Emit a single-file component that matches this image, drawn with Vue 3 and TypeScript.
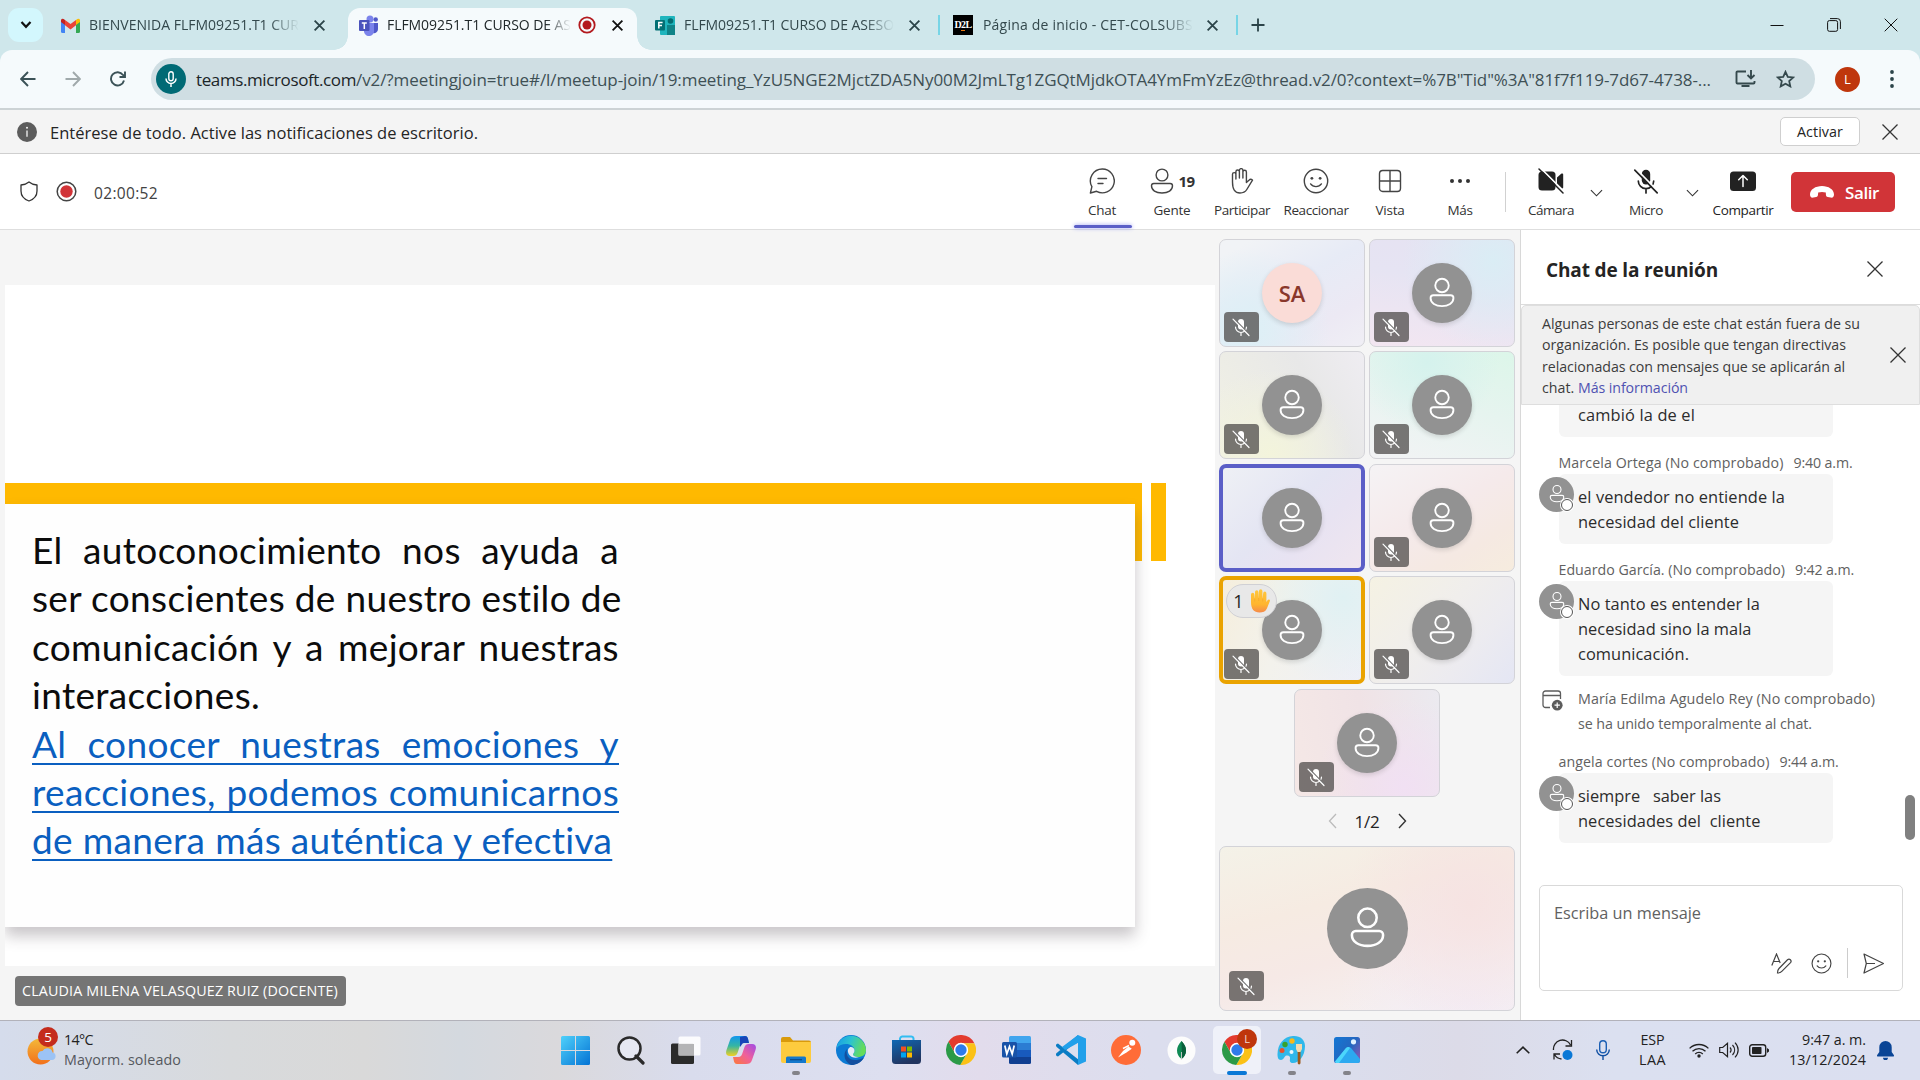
<script setup lang="ts">
interface Tile {
  id: number
  bg: string
  initials?: string
  muted: boolean
  state?: 'speaking' | 'raised'
}

interface Message {
  author: string
  authorWidth: number
  time: string
  lines: { text: string; width: number }[]
}

// Spreads a line of text over a given width, so that labels keep their measure in any sans family
const vFit = {
  mounted(el: HTMLElement, binding: { value: number }) {
    const count = (el.textContent || '').length
    const natural = el.getBoundingClientRect().width
    if (count > 0) el.style.letterSpacing = `${(binding.value - natural) / count}px`
  },
}

const tiles: Tile[] = [
  { id: 1, bg: 'radial-gradient(circle at 20% 85%, #dcf0f6, transparent 55%), linear-gradient(150deg, #f1f3f6 10%, #e7ebf6 45%, #ece9f4 75%, #f0eff5)', initials: 'SA', muted: true },
  { id: 2, bg: 'radial-gradient(circle at 85% 20%, #daedf5, transparent 60%), linear-gradient(10deg, #f3e6f1, #e6e4f3 60%, #e6e2f2)', muted: true },
  { id: 3, bg: 'radial-gradient(circle at 35% 95%, #f3f4dc, transparent 60%), linear-gradient(60deg, #f1f1e4, #e8e8e8 65%, #efedf2)', muted: true },
  { id: 4, bg: 'radial-gradient(circle at 40% 10%, #d5f2ed, transparent 55%), linear-gradient(200deg, #dcf6e9, #e6f4ef 45%, #f3f3f5)', muted: true },
  { id: 5, bg: 'linear-gradient(135deg, #eff1f5, #e4e5f3 45%, #e8e3f2 65%, #f0e6ef)', muted: false, state: 'speaking' },
  { id: 6, bg: 'linear-gradient(150deg, #f5f3f5, #f5eaeb 45%, #f5e9e2 75%, #f6ecde)', muted: true },
  { id: 7, bg: 'radial-gradient(circle at 85% 20%, #e0f1f3, transparent 60%), linear-gradient(110deg, #f5eedc, #f3f2ec 45%, #efeff7)', muted: true, state: 'raised' },
  { id: 8, bg: 'linear-gradient(130deg, #f5f2e3, #f0eeec 45%, #ecebf0 70%, #e4e6f4)', muted: true },
  { id: 9, bg: 'radial-gradient(circle at 75% 90%, #f1e0f3, transparent 60%), linear-gradient(80deg, #f5e8e6, #f0e3e6 50%, #ebeaf0)', muted: true },
]

const bannerLines = [
  { text: 'Algunas personas de este chat están fuera de su', width: 318 },
  { text: 'organización. Es posible que tengan directivas', width: 304 },
  { text: 'relacionadas con mensajes que se aplicarán al', width: 303 },
]

const earlier: Message[] = [
  {
    author: 'Marcela Ortega (No comprobado)',
    authorWidth: 225,
    time: '9:40 a.m.',
    lines: [
      { text: 'el vendedor no entiende la', width: 207 },
      { text: 'necesidad del cliente', width: 161 },
    ],
  },
  {
    author: 'Eduardo García. (No comprobado)',
    authorWidth: 226.5,
    time: '9:42 a.m.',
    lines: [
      { text: 'No tanto es entender la', width: 182 },
      { text: 'necesidad sino la mala', width: 173.5 },
      { text: 'comunicación.', width: 111 },
    ],
  },
]

const latest: Message[] = [
  {
    author: 'angela cortes (No comprobado)',
    authorWidth: 211,
    time: '9:44 a.m.',
    lines: [
      { text: 'siempre   saber las', width: 143 },
      { text: 'necesidades del  cliente', width: 182.5 },
    ],
  },
]

const groups = [
  { key: 'earlier', messages: earlier, event: true },
  { key: 'latest', messages: latest, event: false },
]

const slideText = [
  'El autoconocimiento nos ayuda a',
  'ser conscientes de nuestro estilo de',
  'comunicación y a mejorar nuestras',
  'interacciones.',
]
const slideLink = [
  'Al conocer nuestras emociones y',
  'reacciones, podemos comunicarnos',
  'de manera más auténtica y efectiva',
]
const slideWidths = [587, 587, 587, 226]
const linkWidths = [587, 587, 579.5]
</script>

<template>
  <div class="screen">
    <svg class="sprite" aria-hidden="true">
      <symbol id="i-x" viewBox="0 0 20 20"><path d="M2.5 2.5l15 15M17.5 2.5l-15 15" fill="none" stroke="currentColor" /></symbol>
      <symbol id="i-person" viewBox="0 0 32 36">
        <g fill="none" stroke="currentColor" stroke-width="2"><circle cx="16" cy="10" r="7.2" /><path d="M6.8 20.4h18.4a3 3 0 0 1 3 3c0 5.4-5.4 8.6-12.2 8.6S3.8 28.800 3.800 23.400a3 3 0 0 1 3-3z" /></g>
      </symbol>
      <symbol id="i-micoff" viewBox="0 0 20 20">
        <rect x="7" y="2" width="6" height="10.500" rx="3" fill="currentColor" />
        <path d="M4.500 10a5.500 5.500 0 0 0 11 0M10 15.500V18.500" fill="none" stroke="currentColor" stroke-width="1.200" stroke-linecap="round" />
        <path class="slash-gap" d="M3.200 1.700l15 15.400" fill="none" stroke-width="1.300" />
        <path d="M2 2.200l16 16.300" fill="none" stroke="currentColor" stroke-width="1.200" stroke-linecap="round" />
      </symbol>
      <symbol id="i-chrome" viewBox="2 2 44 44">
        <path d="M43.600 14H24a10 10 0 0 0-8.660 15L5.540 12.030A22 22 0 0 1 43.600 14z" fill="#e33b2e" />
        <path d="M43.600 14A22 22 0 0 1 22.860 45.970L32.660 29A10 10 0 0 0 24 14z" fill="#fbc116" />
        <path d="M22.860 45.970A22 22 0 0 1 5.540 12.030L15.340 29a10 10 0 0 0 17.320 0z" fill="#2b9a47" />
        <circle cx="24" cy="24" r="10.500" fill="#fff" /><circle cx="24" cy="24" r="8.300" fill="#2f7bea" />
      </symbol>
      <symbol id="i-smile" viewBox="0 0 24 24">
        <circle cx="12" cy="12" r="10.800" fill="none" stroke="currentColor" stroke-width="1.300" />
        <circle cx="8.200" cy="9.500" r="1.300" fill="currentColor" /><circle cx="15.800" cy="9.500" r="1.300" fill="currentColor" />
        <path d="M7 14.700c2.400 3.300 7.600 3.300 10 0" fill="none" stroke="currentColor" stroke-width="1.300" stroke-linecap="round" />
      </symbol>
      <symbol id="i-down" viewBox="0 0 14 8"><path d="M1 1l6 6 6-6" fill="none" stroke="currentColor" stroke-width="1.200" /></symbol>
    </svg>

    <header class="tabs">
      <div class="tab-search"><svg width="14" height="10" viewBox="0 0 14 10"><path d="M2.500 2l4.500 4.800L11.500 2" fill="none" stroke="#111" stroke-width="2.200" /></svg></div>
      <div class="tab first">
        <svg width="19" height="15" viewBox="0 0 19 15"><path d="M0 2v11.500Q0 15 1.500 15H4V5z" fill="#4285f4" /><path d="M19 2v11.500q0 1.500-1.500 1.500H15V5z" fill="#34a853" /><path d="M15 2v5l4-3V2q-1-2.500-4 0z" fill="#fbbc04" /><path d="M4 2v5L0 4V2q1-2.500 4 0z" fill="#c5221f" /><path d="M4 2l5.500 4L15 2v5.200l-5.500 4.300L4 7.200z" fill="#ea4335" /></svg>
        <div class="tab-title w210"><span v-fit="210">BIENVENIDA FLFM09251.T1 CUR</span></div>
        <svg class="tx"><use href="#i-x" /></svg>
      </div>
      <div class="tab active">
        <svg width="19" height="21" viewBox="0 0 19 21"><circle cx="11" cy="4" r="3.500" fill="#7b83eb" /><circle cx="16.700" cy="4.500" r="2.200" fill="#5059c9" /><path d="M13 8h6v6a4 4 0 0 1-5 4z" fill="#5059c9" /><path d="M5 8h10v7a5 5 0 0 1-10 2z" fill="#7b83eb" /><rect y="5" width="10.500" height="11" rx="1" fill="#4b53bc" /><path d="M2.800 8h5M5.300 8v6" stroke="#fff" stroke-width="1.500" /></svg>
        <div class="tab-title w183"><span v-fit="184">FLFM09251.T1 CURSO DE AS</span></div>
        <svg class="rec" viewBox="0 0 18 18"><circle cx="9" cy="9" r="7.700" fill="none" stroke="#b3191e" stroke-width="1.800" /><circle cx="9" cy="9" r="4.500" fill="#b3191e" /></svg>
        <svg class="tx"><use href="#i-x" /></svg>
      </div>
      <div class="tab third">
        <svg width="20" height="19" viewBox="0 0 20 19"><rect x="5" width="15" height="19" rx="1" fill="#1fb5bd" /><path d="M12 9h8v10h-8z" fill="#0f8387" /><circle cx="15.500" cy="5" r="2.800" fill="#036c70" /><rect y="4" width="10" height="10.500" rx="1" fill="#037074" /><path d="M3.800 12.500v-6h3.800M3.800 9.500h3.200" fill="none" stroke="#fff" stroke-width="1.500" /></svg>
        <div class="tab-title w208"><span v-fit="210">FLFM09251.T1 CURSO DE ASESO</span></div>
        <svg class="tx"><use href="#i-x" /></svg>
      </div>
      <i class="tsep"></i>
      <div class="tab fourth">
        <span class="d2l">D<em>2</em>L</span>
        <div class="tab-title w210"><span v-fit="210">Página de inicio - CET-COLSUBS</span></div>
        <svg class="tx"><use href="#i-x" /></svg>
      </div>
      <i class="tsep"></i>
      <svg class="plus" viewBox="0 0 14 14"><path d="M7 .5v13M.5 7h13" stroke="#2b4449" stroke-width="1.800" /></svg>
      <div class="winctl">
        <svg width="14" height="14" viewBox="0 0 14 14"><path d="M.5 7.500h13" stroke="#111" /></svg>
        <svg width="14" height="14" viewBox="0 0 14 14"><rect x=".6" y="2.600" width="10" height="10.700" rx="1.800" fill="none" stroke="#111" /><path d="M3 .6h7.400a3 3 0 0 1 3 3V11" fill="none" stroke="#111" /></svg>
        <svg width="14" height="14" viewBox="0 0 14 14"><path d="M.7.7l12.600 12.600M13.300.7L.7 13.300" stroke="#111" /></svg>
      </div>
    </header>

    <div class="toolbar">
      <svg width="16" height="16" viewBox="0 0 16 16"><path d="M15.500 8H1.500M8 1L1.200 8 8 15" fill="none" stroke="#3b5257" stroke-width="1.900" /></svg>
      <svg width="16" height="16" viewBox="0 0 16 16"><path d="M.5 8h14M8 1l6.800 7L8 15" fill="none" stroke="#a0a9ab" stroke-width="1.900" /></svg>
      <svg width="16" height="16" viewBox="0 0 16 16"><path d="M14 9.500A6.600 6.600 0 1 1 13 4l2 2M15 .5V6H9.500" fill="none" stroke="#3b5257" stroke-width="1.900" /></svg>
      <div class="omni">
        <div class="micdot"><svg width="12" height="17" viewBox="0 0 12 17"><rect x="3.800" y=".8" width="4.400" height="9" rx="2.200" fill="none" stroke="#fff" stroke-width="1.400" /><path d="M1 7.500a5 5 0 0 0 10 0M6 12.500V16" fill="none" stroke="#fff" stroke-width="1.500" /></svg></div>
        <div class="url"><span v-fit="160" class="host">teams.microsoft.com</span><span v-fit="1355">/v2/?meetingjoin=true#/l/meetup-join/19:meeting_YzU5NGE2MjctZDA5Ny00M2JmLTg1ZGQtMjdkOTA4YmFmYzEz@thread.v2/0?context=%7B"Tid"%3A"81f7f119-7d67-4738-...</span></div>
        <svg class="install" width="21" height="18" viewBox="0 0 21 18"><path d="M11 1.500H2.500a1 1 0 0 0-1 1v10a1 1 0 0 0 1 1h16a1 1 0 0 0 1-1V11M6.500 16h8M16 0v8M12.500 5l3.500 3.500L19.500 5" fill="none" stroke="#35494d" stroke-width="1.900" /></svg>
        <svg class="star" width="19" height="18" viewBox="0 0 19 18"><path d="M9.500 1.800l2.300 5 5.400.6-4 3.700 1.100 5.300-4.800-2.700-4.800 2.700 1.100-5.300-4-3.700 5.400-.6z" fill="none" stroke="#35494d" stroke-width="1.800" /></svg>
      </div>
      <span class="avatar-l">L</span>
      <svg class="kebab" width="4" height="18" viewBox="0 0 4 18"><circle cx="2" cy="2" r="1.900" /><circle cx="2" cy="9" r="1.900" /><circle cx="2" cy="16" r="1.900" /></svg>
    </div>

    <div class="notice">
      <svg width="20" height="20" viewBox="0 0 20 20"><circle cx="10" cy="10" r="10" fill="#5c5c5c" /><circle cx="10" cy="5.800" r="1" fill="#f4f4f4" /><path d="M10 8.500v6.300" stroke="#f4f4f4" stroke-width="1.300" /></svg>
      <span v-fit="428" class="notice-text">Entérese de todo. Active las notificaciones de escritorio.</span>
      <button><span v-fit="46">Activar</span></button>
      <svg class="nx"><use href="#i-x" /></svg>
    </div>

    <div class="callbar">
      <svg width="18" height="21" viewBox="0 0 18 21"><path d="M9 1c2.300 1.900 4.800 2.800 8 3v6c0 5.200-3.200 8.300-8 10-4.800-1.700-8-4.800-8-10V4c3.200-.2 5.700-1.100 8-3z" fill="none" stroke="#333" stroke-width="1.300" stroke-linejoin="round" /></svg>
      <svg class="recdot" width="21" height="21" viewBox="0 0 21 21"><circle cx="10.500" cy="10.500" r="9.300" fill="#fff" stroke="#444" stroke-width="1.500" /><circle cx="10.500" cy="10.500" r="6.200" fill="#d13438" /></svg>
      <span v-fit="64" class="clock">02:00:52</span>
      <div class="actions">
        <div class="act on"><svg width="26" height="26" viewBox="0 0 26 26"><path d="M13.300 1a11.900 11.900 0 1 1-5.700 22.300L1.400 25l1.500-6.300A11.900 11.900 0 0 1 13.300 1z" fill="none" stroke="#444" stroke-width="1.400" stroke-linejoin="round" /><path d="M9 10.500h8.500M9 15.500h5" stroke="#444" stroke-width="1.400" stroke-linecap="round" /></svg><span v-fit="28">Chat</span></div>
        <div class="act"><div class="people"><svg width="24" height="26" viewBox="0 0 24 26"><g fill="none" stroke="#444" stroke-width="1.400"><circle cx="12" cy="7" r="5.900" /><path d="M3.800 15.500h16.400a2.300 2.300 0 0 1 2.300 2.300c0 4.400-4.300 7.200-10.500 7.200S1.500 22.200 1.500 17.800a2.300 2.300 0 0 1 2.300-2.300z" /></g></svg><b v-fit="16">19</b></div><span v-fit="37">Gente</span></div>
        <div class="act"><svg width="24" height="26" viewBox="0 0 24 26"><path d="M2.500 14V6.300a1.700 1.700 0 0 1 3.400 0V11 3.800a1.700 1.700 0 0 1 3.500 0V10 2.400a1.700 1.700 0 0 1 3.500 0V10 4a1.700 1.700 0 0 1 3.500 0v10.500l2.800-2.600c1-1 2.600-.8 3.300.3l-5.700 9.300C15.200 24 13 25 10 25c-5.500 0-7.500-4-7.500-11z" fill="none" stroke="#444" stroke-width="1.400" stroke-linejoin="round" /></svg><span v-fit="56">Participar</span></div>
        <div class="act wide"><svg width="26" height="26" class="dk"><use href="#i-smile" /></svg><span v-fit="65">Reaccionar</span></div>
        <div class="act"><svg width="24" height="26" viewBox="0 0 24 26"><rect x="1.500" y="2.500" width="21" height="21" rx="3.200" fill="none" stroke="#444" stroke-width="1.400" /><path d="M12 2.500v21M1.500 13h21" stroke="#444" stroke-width="1.400" /></svg><span v-fit="29">Vista</span></div>
        <div class="act"><svg width="22" height="26" viewBox="0 0 22 26"><g fill="#333"><circle cx="3" cy="13" r="2" /><circle cx="11" cy="13" r="2" /><circle cx="19" cy="13" r="2" /></g></svg><span v-fit="25">Más</span></div>
        <i class="asep"></i>
        <div class="act cam"><svg width="26" height="26" viewBox="0 0 26 26"><rect x=".5" y="3.500" width="17" height="19" rx="3.500" fill="#222" /><path d="M19 9.500l4.200-3.700c1-.8 2-.3 2 .9v12.600c0 1.200-1 1.700-2 .9L19 16.500z" fill="#222" /><path d="M2.500 0L27 24.500" stroke="#fff" stroke-width="1.600" /><path d="M1 1l24 24" stroke="#222" stroke-width="1.500" stroke-linecap="round" /></svg><span v-fit="46">Cámara</span></div>
        <div class="chev c1"><svg width="13" height="8"><use href="#i-down" /></svg></div>
        <div class="act wide"><svg width="28" height="28" class="bk micro"><use href="#i-micoff" /></svg><span v-fit="34">Micro</span></div>
        <div class="chev c2"><svg width="13" height="8"><use href="#i-down" /></svg></div>
        <div class="act share"><svg width="26" height="26" viewBox="0 0 26 26"><rect y="3.500" width="26" height="19.500" rx="3.500" fill="#222" /><path d="M13 18.500v-10M8.700 11.800L13 7.500l4.300 4.300" fill="none" stroke="#fff" stroke-width="1.500" stroke-linecap="round" stroke-linejoin="round" /></svg><span v-fit="61">Compartir</span></div>
        <div class="leave"><svg width="24" height="12" viewBox="0 0 24 12"><path d="M0 8.500C0 3.500 5.500 0 12 0s12 3.500 12 8.500c0 2.500-1.300 3.500-3.500 3l-2.700-.6c-1.400-.3-1.800-1.200-1.900-2.500L15.800 6.500c-2.400-.8-5.200-.8-7.600 0L8 8.400c-.1 1.300-.5 2.200-1.900 2.500l-2.600.6C1.300 12 0 11 0 8.500z" fill="#fff" /></svg><b v-fit="34">Salir</b></div>
      </div>
    </div>

    <main>
      <section class="stage">
        <div class="slide">
          <i class="accent"></i>
          <div class="card">
            <div class="copy">
              <p v-for="(line, i) in slideText" :key="line" :class="{ full: slideWidths[i] === 587 }">{{ line }}</p>
              <p v-for="(line, i) in slideLink" :key="line" class="link" :class="{ full: linkWidths[i] === 587 }">{{ line }}</p>
            </div>
          </div>
          <i class="accent2"></i>
        </div>
        <div class="presenter"><span v-fit="316">CLAUDIA MILENA VELASQUEZ RUIZ (DOCENTE)</span></div>
      </section>

      <section class="gallery">
        <div class="grid">
          <div v-for="t in tiles" :key="t.id" class="tile" :class="t.state" :style="{ background: t.bg }">
            <div class="face" :class="{ initials: t.initials }">
              <span v-if="t.initials">{{ t.initials }}</span>
              <svg v-else width="30" height="34"><use href="#i-person" /></svg>
            </div>
            <div v-if="t.muted" class="mute"><svg width="20" height="20"><use href="#i-micoff" /></svg></div>
            <div v-if="t.state === 'raised'" class="hand">1
              <svg width="20" height="24" viewBox="0 0 20 24"><defs><linearGradient id="hg" x1="0" y1="0" x2="0" y2="1"><stop offset="0" stop-color="#ffc83d" /><stop offset=".65" stop-color="#ffb52e" /><stop offset="1" stop-color="#f58a4b" /></linearGradient></defs><path d="M1 13V5.500a1.700 1.700 0 0 1 3.400 0L5 10V3a1.700 1.700 0 0 1 3.400 0v6.500L9 2a1.700 1.700 0 0 1 3.400 0v8l.8-5.800a1.600 1.600 0 0 1 3.200 0V13l1.300-2c.8-1.200 2.600-.4 2.200 1l-3 7.500C15.500 22.500 13 23.500 9.500 23.500 4 23.500 1 20 1 13z" fill="url(#hg)" /><path d="M4.700 9.500v3M8.700 9v3M12.700 9.500v3" stroke="#f3a52e" stroke-width=".6" /></svg>
            </div>
          </div>
        </div>
        <div class="pager">
          <svg width="9" height="16" viewBox="0 0 9 16"><path d="M8 1L1.500 8 8 15" fill="none" stroke="#bbb" stroke-width="1.300" /></svg>
          <span v-fit="25">1/2</span>
          <svg width="9" height="16" viewBox="0 0 9 16"><path d="M1 1l6.500 7L1 15" fill="none" stroke="#333" stroke-width="1.400" /></svg>
        </div>
        <div class="tile large">
          <div class="face"><svg width="41" height="46"><use href="#i-person" /></svg></div>
          <div class="mute"><svg width="20" height="20"><use href="#i-micoff" /></svg></div>
        </div>
      </section>

      <aside class="chat">
        <div class="chat-head"><h2><span v-fit="172">Chat de la reunión</span></h2><svg class="nx"><use href="#i-x" /></svg></div>
        <div class="banner">
          <div>
            <div v-for="l in bannerLines" :key="l.text"><span v-fit="l.width">{{ l.text }}</span></div>
            <div><span v-fit="36">chat. </span><a v-fit="110">Más información</a></div>
          </div>
          <svg class="nx"><use href="#i-x" /></svg>
        </div>
        <div class="thread">
          <div class="bubble cut"><span v-fit="117">cambió la de el</span></div>
          <template v-for="g in groups" :key="g.key">
            <div v-for="m in g.messages" :key="m.author" class="msg">
              <div class="meta"><span v-fit="m.authorWidth">{{ m.author }}</span><span v-fit="59" class="time">{{ m.time }}</span></div>
              <div class="bubble">
                <div v-for="l in m.lines" :key="l.text"><span v-fit="l.width">{{ l.text }}</span></div>
                <div class="mini"><svg width="18" height="20"><use href="#i-person" /></svg><i></i></div>
              </div>
            </div>
            <div v-if="g.event" class="event">
              <svg width="21" height="21" viewBox="0 0 21 21"><path d="M18.500 9V3.500a2.500 2.500 0 0 0-2.500-2.500H3.500A2.500 2.500 0 0 0 1 3.500V15a2.500 2.500 0 0 0 2.500 2.500H8M1 5.500h17.500" fill="none" stroke="#5c5c5c" stroke-width="1.300" /><circle cx="15.200" cy="15.200" r="5.400" fill="#5c5c5c" /><path d="M15.200 12.500v5.400M12.500 15.200h5.400" stroke="#fff" stroke-width="1.200" /></svg>
              <div>
                <div><span v-fit="297">María Edilma Agudelo Rey (No comprobado)</span></div>
                <div><span v-fit="234">se ha unido temporalmente al chat.</span></div>
              </div>
            </div>
          </template>
          <i class="thumb"></i>
        </div>
        <div class="compose">
          <span v-fit="147" class="ph">Escriba un mensaje</span>
          <div class="tools">
            <svg width="21" height="21" viewBox="0 0 21 21"><path d="M.8 12.500L5.500 1l3.700 9M2.500 8.500h6.200" fill="none" stroke="#444" stroke-width="1.200" /><path d="M6.500 20c0-2 .3-3.300 1.500-4.500l8.500-8.700c2-1.700 4.700.7 3 2.800l-8.700 8.700C9.600 19.600 8.300 20 6.500 20z" fill="none" stroke="#444" stroke-width="1.200" /></svg>
            <svg width="21" height="21" class="dk sm"><use href="#i-smile" /></svg>
            <i></i>
            <svg width="21" height="21" viewBox="0 0 21 21"><path d="M1 1l19.500 9.500L1 20l2.300-9.500zM3.300 10.500H12" fill="none" stroke="#444" stroke-width="1.200" stroke-linejoin="round" /></svg>
          </div>
        </div>
      </aside>
    </main>

    <footer>
      <div class="weather">
        <svg width="32" height="36" viewBox="0 0 32 36"><defs><linearGradient id="sun" x1="0" y1="0" x2="0" y2="1"><stop offset="0" stop-color="#f3b93a" /><stop offset="1" stop-color="#f2701b" /></linearGradient></defs><circle cx="13.500" cy="21.500" r="13" fill="url(#sun)" /><path d="M14 30h11a3.800 3.800 0 0 0 .6-7.500A5.500 5.500 0 0 0 15.500 21 4.600 4.600 0 0 0 14 30z" fill="#9cc3f5" /></svg>
        <span class="count">5</span>
        <div class="wtext"><span v-fit="29">14°C</span><br /><span v-fit="117" class="soft">Mayorm. soleado</span></div>
      </div>

      <div class="apps">
        <div><svg width="29" height="29" viewBox="0 0 29 29"><defs><linearGradient id="win" x1="0" y1="0" x2="1" y2="1"><stop offset="0" stop-color="#4fd1fb" /><stop offset="1" stop-color="#0473d4" /></linearGradient></defs><path d="M0 1.500Q0 0 1.500 0H14v14H0zM15 0h12.500Q29 0 29 1.500V14H15zM0 15h14v14H1.500Q0 29 0 27.500zM15 15h14v12.500q0 1.500-1.500 1.500H15z" fill="url(#win)" /></svg></div>
        <div><svg width="28" height="29" viewBox="0 0 28 29"><circle cx="12.500" cy="12.500" r="11" fill="#e6e8f2" stroke="#2a2a2a" stroke-width="2.500" /><path d="M19 20l7 7" stroke="#2a2a2a" stroke-width="3.200" stroke-linecap="round" /></svg></div>
        <div><svg width="30" height="28" viewBox="0 0 30 28"><rect y="7.500" width="23" height="20.500" rx="1.500" fill="#2b2b2b" /><rect x="7.500" y=".5" width="22" height="19" rx="1.500" fill="#fff" fill-opacity=".88" /><path d="M7.500 8H23v11.500H7.500z" fill="#b4b4b6" /></svg></div>
        <div><svg width="30" height="28" viewBox="0 0 30 28"><defs><linearGradient id="cpa" x1="0" y1="0" x2="0" y2="1"><stop offset="0" stop-color="#1196ee" /><stop offset=".5" stop-color="#36b6a2" /><stop offset="1" stop-color="#f2d020" /></linearGradient><linearGradient id="cpb" x1="1" y1="0" x2="0" y2="1"><stop offset="0" stop-color="#a04be6" /><stop offset=".5" stop-color="#f0609a" /><stop offset="1" stop-color="#fc7a37" /></linearGradient></defs><path d="M10 0h9c3 0 3 3 4 7h-5c-3 0-4 2-4.800 5l-1.700 5c-.8 2-2 3-4 3H4c-4 0-4.500-3-3.500-6L4 4c1-3 3-4 6-4z" fill="url(#cpa)" /><path d="M14 1l5-1c3 0 3 3 4 7h-5c-2 0-2 2-4 4z" fill="#1744b8" /><path d="M20 28h-9c-3 0-3-3-4-7h5c3 0 4-2 4.800-5l1.700-5c.8-2 2-3 4-3H26c4 0 4.500 3 3.500 6L26 24c-1 3-3 4-6 4z" fill="url(#cpb)" /></svg></div>
        <div><svg width="30" height="28" viewBox="0 0 30 28"><path d="M0 3Q0 1 2 1h7l3 3.500h16q2 0 2 2V14H0z" fill="#d99a0b" /><path d="M0 6h30v19q0 2-2 2H2q-2 0-2-2z" fill="#fdcb3e" /><path d="M5 27v-5q0-1.500 1.500-1.500h17Q25 20.500 25 22v5z" fill="#1478cc" /><path d="M9 23.700h12" stroke="#0b4a8a" stroke-width="1.200" /></svg><i class="dot"></i></div>
        <div><svg width="30" height="30" viewBox="0 0 30 30"><defs><linearGradient id="ed" x1="0" y1="0" x2="1" y2=".3"><stop offset="0" stop-color="#179be8" /><stop offset=".5" stop-color="#2cc3d0" /><stop offset="1" stop-color="#65dc5a" /></linearGradient></defs><circle cx="15" cy="15" r="15" fill="#0c7bd4" /><path d="M1 10.500A15 15 0 0 1 30 15c0 5-4 7-8 7-3.500 0-5-1.500-5-2.500s1.500-1.500 1.500-4c0-4-4-6.500-8.500-6.500-4 0-7 1-9 4z" fill="url(#ed)" /><path d="M11 14c-2 8 4 15 17 8.500C25 28 20 30 15.500 30 9 28 6 19 11 14z" fill="#134f9f" /><path d="M18.500 15.500c0 2.500-1.500 3-1.500 4 0 1.500 3 3 6 2.500-6 2-10-1-11-5-.5-2.500 1-5 3-5 1.800 0 3.500 1.500 3.500 3.500z" fill="#e4eaf6" /></svg></div>
        <div><svg width="29" height="30" viewBox="0 0 29 30"><defs><linearGradient id="st" x1="0" y1="0" x2=".4" y2="1"><stop offset="0" stop-color="#1068b4" /><stop offset="1" stop-color="#21345f" /></linearGradient></defs><path d="M8 6V3.500A2.500 2.500 0 0 1 10 1.500h9a2.500 2.500 0 0 1 2.500 2V6" fill="none" stroke="#33bdf2" stroke-width="2" /><path d="M0 5h29v20.500q0 3.500-3.500 3.500h-22Q0 29 0 25.500z" fill="url(#st)" /><path d="M9 11.500h5v5H9z" fill="#f25022" /><path d="M15 11.500h5v5h-5z" fill="#7fba00" /><path d="M9 17.500h5v5H9z" fill="#00a4ef" /><path d="M15 17.500h5v5h-5z" fill="#ffb900" /></svg></div>
        <div><svg width="30" height="30"><use href="#i-chrome" /></svg></div>
        <div><svg width="29" height="28" viewBox="0 0 29 28"><path d="M7 1.500Q7 0 8.500 0h19Q29 0 29 1.500V7H7z" fill="#41a5ee" /><path d="M7 7h22v7H7z" fill="#2b7cd3" /><path d="M7 14h22v7H7z" fill="#185abd" /><path d="M7 21h22v5.500q0 1.500-1.500 1.500h-19Q7 28 7 26.500z" fill="#103f91" /><rect y="6" width="15" height="15.500" rx="1.500" fill="#1852a8" /><path d="M2.800 9.500l2 8.500 2.700-7.500 2.700 7.500 2-8.500" fill="none" stroke="#fff" stroke-width="1.700" /></svg></div>
        <div><svg width="30" height="30" viewBox="0 0 30 30"><path d="M2 8.500L23 25v-20L2 21.500c-2-.5-3-2.200-1-3.700L22 0v30L1 12.200c-2-1.500-1-3.200 1-3.700z" fill="#0a7cc4" /><path d="M22 0l8 3.500v23L22 30V8L9 15 6 12z" fill="#22a0ea" /><path d="M22 8v14L12.500 15z" fill="#dbe0ef" /></svg></div>
        <div><svg width="30" height="30" viewBox="0 0 30 30"><circle cx="15" cy="15" r="15" fill="#ff6c37" /><circle cx="21.300" cy="7.800" r="3" fill="#fff" /><path d="M7 22.500l5-6.500 5.500-4.500 3.300 2.300-5.300 3.700z" fill="#fff" /><path d="M12 13.500l6-3" stroke="#fff" stroke-width="1.500" /></svg></div>
        <div><svg width="29" height="29" viewBox="0 0 29 29"><circle cx="14.500" cy="14.500" r="14" fill="#fcfcfc" /><path d="M14.500 5c3 3.300 4.500 6 4.500 9.500s-1.500 6-4 8h-1c-2.500-2-4-4.500-4-8S11.500 8.300 14.500 5z" fill="#0f8a54" /><path d="M14.500 5c3 3.300 4.500 6 4.500 9.500s-1.500 6-4 8z" fill="#0a5f3b" /><path d="M14.500 16v7.500" stroke="#bcc5c0" /></svg></div>
        <div class="running"><svg width="30" height="30"><use href="#i-chrome" /></svg><span class="lbadge">L</span><i class="bar"></i></div>
        <div><svg width="30" height="30" viewBox="0 0 30 30"><path d="M16 1c7-.5 12 3.500 12 10 0 10-6 17-12 17-3 0-3.500-2-3-4 .5-2.500-1-4-3.500-3.500C7 21 7 25 4 25 1 25 .5 22 .5 19 .5 9 7 1.500 16 1z" fill="#30b8ea" /><circle cx="8" cy="9.500" r="2.700" fill="#37a12c" /><circle cx="15" cy="6" r="2.700" fill="#f9b917" /><circle cx="5" cy="15.500" r="2.500" fill="#e7512b" /><circle cx="14.500" cy="17" r="2" fill="#eaf6fc" /><path d="M20.700 15h2.800v13a1.400 1.400 0 0 1-2.800 0z" fill="#9c5a1c" /><path d="M19 9h6v5l-1.500 3h-3L19 14z" fill="#f4d9ae" /></svg><i class="dot"></i></div>
        <div><svg width="26" height="26" viewBox="0 0 26 26"><defs><linearGradient id="ph" x1="0" y1="0" x2="1" y2=".7"><stop offset="0" stop-color="#1377d4" /><stop offset=".6" stop-color="#2467c0" /><stop offset="1" stop-color="#7d5bb5" /></linearGradient></defs><rect width="26" height="26" rx="2.500" fill="url(#ph)" /><path d="M1 24.500L12 11q2.500-2 5 0l9 11v2q0 2-2 2H2z" fill="#2ca9f0" /><path d="M1 24.500L12 11q2.500-2 4 0L5 26H2z" fill="#4cd6fb" /><circle cx="19.500" cy="4.800" r="2.600" fill="#dff1ff" /></svg><i class="dot"></i></div>
      </div>

      <div class="tray">
        <div class="t1"><svg width="14" height="8" viewBox="0 0 14 8"><path d="M.7 7.300L7 1.200l6.300 6.100" fill="none" stroke="#222" stroke-width="1.600" /></svg></div>
        <div class="t2"><svg width="22" height="22" viewBox="0 0 22 22"><path d="M1.500 11A9 9 0 0 1 18.500 6M19.500 1v6h-6M2 20.500V15h6M2.500 15.500a9 9 0 0 0 7 4.500" fill="none" stroke="#222" stroke-width="1.300" /><circle cx="15.500" cy="16" r="5" fill="#0a78d6" /></svg></div>
        <div class="t2"><svg width="14" height="20" viewBox="0 0 14 20"><rect x="3.700" y=".7" width="6.600" height="12" rx="3.300" fill="none" stroke="#1b5fb4" stroke-width="1.400" /><path d="M.7 9.500a6.300 6.300 0 0 0 12.600 0M7 16v4" fill="none" stroke="#0f4ea2" stroke-width="1.400" /></svg></div>
        <div class="lang"><span v-fit="24">ESP</span><br /><span v-fit="27">LAA</span></div>
        <div class="t3"><svg width="20" height="15" viewBox="0 0 20 15"><path d="M.6 5.400a13.300 13.300 0 0 1 18.800 0M3.500 8.300a9.200 9.200 0 0 1 13 0M6.200 11a5.400 5.400 0 0 1 7.600 0" fill="none" stroke="#222" stroke-width="1.300" /><circle cx="10" cy="13" r="1.700" fill="#222" /></svg></div>
        <div class="t3"><svg width="20" height="16" viewBox="0 0 20 16"><path d="M.7 5.500h3L8.500 1.300v13.400l-4.800-4.200h-3zM11 5.500c1.300 1.500 1.300 3.500 0 5M13.500 3c2.800 3 2.800 7 0 10M16 .7c4.200 4.300 4.200 10.300 0 14.600" fill="none" stroke="#222" stroke-width="1.200" /></svg></div>
        <div class="t3"><svg width="20" height="13" viewBox="0 0 20 13"><rect x=".7" y=".7" width="16" height="11.600" rx="2.500" fill="none" stroke="#222" stroke-width="1.400" /><rect x="3" y="3" width="9.500" height="7" rx=".8" fill="#222" /><path d="M18 4v5l2-1.500v-2z" fill="#222" /></svg></div>
        <div class="date"><span v-fit="64">9:47 a. m.</span><br /><span v-fit="77">13/12/2024</span></div>
        <svg class="bell" width="17" height="19" viewBox="0 0 17 19"><path d="M8.500 0a6.200 6.200 0 0 1 6.200 6.200V11l2.100 3c.5.800 0 1.600-.8 1.600H1c-.8 0-1.300-.8-.8-1.600l2.100-3V6.200A6.200 6.200 0 0 1 8.500 0zM6 16.800h5a2.500 2.500 0 0 1-5 0z" fill="#0a4596" /></svg>
      </div>
    </footer>
  </div>
</template>

<style>
body { margin: 0; overflow: hidden; }
</style>

<style scoped>
.screen { width: 1920px; height: 1080px; overflow: hidden; display: flex; flex-direction: column; background: #f5f5f5; color: #242424; font-family: "Open Sans", "Noto Sans", sans-serif; font-size: 14.3px; }
.screen * { box-sizing: border-box; }
.screen svg { flex: none; display: block; }
span, a { white-space: pre; }
.sprite { position: absolute; width: 0; height: 0; }

.tabs { height: 50px; flex: none; background: #cfe7eb; display: flex; align-items: center; padding-left: 8px; color: #33484c; font-size: 14px; }
.tab-search { width: 35px; height: 34px; border-radius: 11px; background: #d3f7fd; display: flex; align-items: center; justify-content: center; }
.tab { height: 42px; display: flex; align-items: center; }
.tab-title { margin-left: 11px; line-height: 24px; height: 24px; -webkit-mask-image: linear-gradient(90deg, #000 86%, transparent 100%); mask-image: linear-gradient(90deg, #000 86%, transparent 100%); }
.tab-title span { display: inline-block; }
.w210 { width: 210px; }
.w183 { width: 184px; }
.w208 { width: 210px; }
.tx { width: 13px; height: 13px; color: #2b4449; stroke-width: 2.800; }
.first { width: 305px; padding-left: 18px; }
.first .tx { margin-left: 14px; }
.first .tab-title { margin-left: 9px; }
.active { position: relative; width: 289px; height: 42px; margin-top: 8px; padding: 0 0 8px 11px; background: #f5fafc; border-radius: 12px 12px 0 0; color: #20282a; }
.active::before, .active::after { content: ""; position: absolute; bottom: 0; width: 14px; height: 14px; }
.active::before { left: -14px; background: radial-gradient(circle at 0 0, transparent 13.500px, #f5fafc 14px); }
.active::after { right: -14px; background: radial-gradient(circle at 100% 0, transparent 13.500px, #f5fafc 14px); }
.active .tx { margin-left: 15px; color: #111; }
.active .tab-title { margin-left: 9px; }
.rec { width: 18px; height: 18px; margin-left: 7px; }
.third { padding-left: 18px; }
.third .tab-title { margin-left: 9px; }
.third .tx { margin-left: 14px; }
.tsep { width: 2px; height: 20px; background: #77d5e6; margin-left: 17px; }
.fourth { padding-left: 13px; }
.fourth .tab-title { margin-left: 10px; }
.fourth .tx { margin-left: 13px; }
.d2l { width: 20px; height: 20px; background: #000; color: #fff; font: bold 10px/20px "Liberation Serif", serif; text-align: center; letter-spacing: -.6px; }
.d2l em { font-style: normal; border-bottom: 1px solid #e87511; }
.plus { width: 14px; height: 14px; margin-left: 13px; }
.winctl { margin-left: auto; display: flex; gap: 43px; padding-right: 22px; }

.toolbar { height: 60px; flex: none; background: linear-gradient(#f5fafc, #f5fafc) 0 0 / 100% 58px no-repeat, #ccd3d5; border-radius: 12px 12px 0 0; display: flex; align-items: center; padding: 0 26px 2px 20px; gap: 29px; position: relative; z-index: 0; }
.screen { background: linear-gradient(#cfe7eb 70px, #f5f5f5 70px); }
.tabs { position: relative; z-index: 1; }
.omni { width: 1665px; height: 42px; margin-left: -4px; border-radius: 21px; background: #cfdee3; display: flex; align-items: center; padding: 0 20px 0 5px; }
.micdot { width: 30px; height: 30px; border-radius: 50%; background: #006a75; display: flex; align-items: center; justify-content: center; }
.url { margin-left: 10px; font-size: 17px; color: #3e5055; display: flex; line-height: 24px; flex: 1; position: relative; top: .5px; }
.host { color: #1b2528; }
.star { margin-left: 20px; }
.avatar-l { width: 25px; height: 25px; border-radius: 50%; background: #bf360c; color: #fff; text-align: center; line-height: 25px; font-size: 13px; margin-left: -9px; }
.kebab { margin-left: 1px; fill: #2b4449; }

.notice { height: 44px; flex: none; background: #f4f4f4; border-bottom: 1px solid #cfcfcf; display: flex; align-items: center; padding: 0 20px 0 17px; }
.notice-text { margin-left: 13px; font-size: 16.500px; position: relative; top: 1px; }
.notice button { margin-left: auto; width: 80px; height: 29px; border: 1px solid #cfcfcf; border-radius: 5px; background: #fff; padding: 0; font: 14.300px "Open Sans", sans-serif; color: #242424; }
.nx { width: 20px; height: 20px; color: #333; stroke-width: 1.300; }
.notice .nx { margin-left: 20px; }

.callbar { height: 76px; flex: none; background: #fff; border-bottom: 1px solid #dedede; display: flex; align-items: center; padding-left: 20px; }
.recdot { margin-left: 18px; }
.clock { margin-left: 17px; font-size: 15.500px; color: #424242; position: relative; top: 1px; }
.actions { margin-left: auto; margin-right: 25px; display: flex; height: 75px; }
.act { position: relative; width: 70px; display: flex; flex-direction: column; align-items: center; padding-top: 14px; font-size: 13.500px; color: #333; }
.act > span { line-height: 18px; margin-top: 7px; white-space: pre; }
.act > svg.micro { margin: -1px 0; }
.act.on::after { content: ""; position: absolute; left: 7px; bottom: 1px; width: 58px; height: 3px; border-radius: 2px; background: #5b5fc7; box-shadow: 0 0 4px #9a9df0; }
.wide { width: 78px; }
.share { width: 88px; color: #222; }
.people { display: flex; align-items: center; gap: 5px; height: 26px; width: 45px; }
.people b { font-size: 15px; font-weight: 700; }
.dk { color: #444; }
.bk { color: #222; --gap: #fff; }
.asep { width: 1px; height: 40px; background: #d1d1d1; margin: 18px 10px 0; }
.chev { display: flex; justify-content: center; padding-top: 35px; color: #333; }
.c1 { width: 21px; }
.c2 { width: 14px; }
.slash-gap { stroke: var(--gap, #767676); }
.leave { width: 104px; height: 40px; margin: 18px 0 0 4px; background: #d13438; border-radius: 5px; color: #fff; display: flex; align-items: center; padding-left: 19px; gap: 11px; font-size: 17px; }
.leave b { font-weight: 600; white-space: pre; }

main { height: 790px; flex: none; display: flex; background: #f5f5f5; }
.stage { width: 1215px; padding: 55px 0 0 5px; }
.slide { position: relative; height: 681px; background: #fff; padding-top: 198px; overflow: hidden; }
.accent { position: absolute; left: 0; top: 198px; width: 1137px; height: 78px; background: #ffb900; }
.accent2 { position: absolute; left: 1146px; top: 198px; width: 15px; height: 78px; background: #ffb900; }
.card { position: relative; margin-top: 21px; width: 1130px; height: 423px; background: #fefefe; box-shadow: 0 9px 14px rgba(60, 50, 60, .28); padding: 22px 0 0 27px; }
.copy { width: 587px; font: 37px/48.400px Lato, sans-serif; color: #0c0c0c; }
.copy p { margin: 0; white-space: nowrap; letter-spacing: .34px; }
.copy .full { text-align-last: justify; }
.copy .link { color: #0a5fc0; text-decoration: underline; text-decoration-thickness: 2px; text-underline-offset: 5px; text-decoration-skip-ink: none; }
.presenter { width: 331px; height: 30px; margin: 10px 0 0 10px; background: #757575; border-radius: 4px; color: #fff; font-size: 14.300px; line-height: 30px; padding-left: 7px; }

.gallery { width: 306px; padding: 9px 0 0 4px; border-right: 1px solid #d8d8d8; }
.grid { display: flex; flex-wrap: wrap; justify-content: center; gap: 4.400px 4px; width: 296px; }
.tile { position: relative; width: 146px; height: 108px; border: 1px solid #d3d3d8; border-radius: 7px; background-origin: border-box !important; display: flex; align-items: center; justify-content: center; }
.speaking { border: 4px solid #5b5fc7; }
.raised { border: 4px solid #eaa300; }
.face { width: 60px; height: 60px; border-radius: 50%; background: #929292; color: #fff; display: flex; align-items: center; justify-content: center; box-shadow: 0 2px 5px rgba(0, 0, 0, .14); }
.initials { background: #fadcd7; color: #89372b; font-size: 22px; font-weight: 600; }
.mute { position: absolute; left: 4px; bottom: 4px; width: 35px; height: 30px; border-radius: 4px; background: rgba(80, 78, 76, .76); color: #fff; display: flex; align-items: center; justify-content: center; }
.mute svg { margin-right: 1px; }
.raised .mute { left: 1px; bottom: 1px; }
.hand { position: absolute; left: 3px; top: 4px; width: 51px; height: 34px; border-radius: 17px; background: #e8e8e8; border: 1px solid #d0d0d4; font-size: 18px; display: flex; align-items: center; justify-content: center; gap: 6px; }
.pager { height: 49px; width: 296px; display: flex; align-items: center; justify-content: center; gap: 18px; font-size: 17px; }
.large { width: 296px; height: 165px; background: radial-gradient(circle at 85% 35%, #f6e3e2, transparent 45%), radial-gradient(circle at 85% 95%, #f3ecf5, transparent 45%), linear-gradient(165deg, #f4f2e8, #f6ebe2 35%, #f6e9e6 60%, #f5f3f4); }
.large .face { width: 81px; height: 81px; box-shadow: none; }
.large .mute { left: 9px; bottom: 9px; }

.chat { width: 399px; background: #fff; display: flex; flex-direction: column; position: relative; }
.chat-head { height: 75px; flex: none; border-bottom: 1px solid #dcdcdc; display: flex; align-items: center; justify-content: space-between; padding: 4px 35px 0 25px; }
h2 { margin: 2px 0 0; font-size: 19px; font-weight: 700; line-height: 26px; }
.banner { height: 100px; flex: none; border: 1px solid #dedede; border-radius: 5px 5px 0 0; background: #f0f0f0; padding: 7px 11px 0 20px; display: flex; justify-content: space-between; line-height: 21.300px; font-size: 14.200px; color: #3c3c3c; }
.banner .nx { margin-top: 32px; }
.banner a { color: #4f52b2; }
.thread { position: relative; height: 480px; padding-left: 38px; font-size: 16.400px; color: #2c2c2c; }
.bubble { position: relative; width: 274px; background: #f5f5f5; border-radius: 6px; padding: 10px 0 10px 19px; line-height: 25px; }
.cut { height: 32px; padding-top: 0; border-radius: 0 0 6px 6px; line-height: 20px; }
.msg { margin-top: 16px; }
.meta { height: 20px; line-height: 20px; margin-bottom: 1px; font-size: 14.200px; color: #616161; margin-left: -.5px; }
.time { margin-left: 10px; }
.mini { position: absolute; left: -20px; top: 3px; width: 35px; height: 35px; border-radius: 50%; background: #929292; color: #fff; display: flex; align-items: center; justify-content: center; padding-bottom: 1px; }
.mini i { position: absolute; left: 22px; top: 22px; width: 12px; height: 12px; border-radius: 50%; border: 1px solid #555; background: #fff; box-shadow: 0 0 0 1px #fff; }
.event { display: flex; margin: 10px 0 16px -17px; font-size: 14.300px; line-height: 25px; color: #616161; }
.event > svg { margin: 4px 15px 0 0; }
.event + .msg { margin-top: 0; }
.thumb { position: absolute; left: 384px; top: 390px; width: 10px; height: 45px; border-radius: 5px; background: #808080; }
.compose { width: 364px; height: 106px; margin-left: 18px; border: 1px solid #d9d9d9; border-radius: 5px; padding: 15px 18px 0 14px; }
.ph { display: inline-block; font-size: 16.300px; line-height: 24px; color: #616161; }
.tools { display: flex; align-items: center; justify-content: flex-end; height: 30px; margin-top: 23px; }
.tools .sm { margin-left: 19px; }
.tools i { width: 1px; height: 30px; background: #ccc; margin: 0 15px; }

footer { height: 60px; flex: none; border-top: 1px solid #b2b2ba; background: linear-gradient(90deg, #d5dcec 0, #d8dadc 12%, #d9d9d9 19%, #d4d9df 24%, #dad9dc 29%, #d9dced 36%, #dddff0 46%, #e2dcec 51%, #dcdeee 60%, #dadeee 68%, #dcdbe8 76%, #dbe0f0 84%, #dbdff0 100%); display: flex; position: relative; }
.weather { width: 548px; padding: 9px 0 0 27px; display: flex; position: relative; }
.count { position: absolute; left: 38px; top: 6px; width: 20px; height: 20px; border-radius: 50%; background: #c42b1c; color: #fff; text-align: center; font-size: 13.500px; line-height: 20px; }
.wtext { margin: 0 0 0 5px; line-height: 20px; font-size: 14.300px; color: #222; }
.soft { color: #55585e; }
.apps { display: flex; height: 60px; }
.apps > div { position: relative; width: 55.100px; height: 58px; display: flex; align-items: center; justify-content: center; }
.dot, .bar { position: absolute; bottom: 4px; left: 50%; height: 4px; border-radius: 2px; background: #838389; width: 8px; margin-left: -4px; }
.bar { width: 20px; margin-left: -10px; background: #0a78d6; }
.running::before { content: ""; position: absolute; left: 3.500px; top: 5px; width: 48px; height: 48px; border-radius: 5px; background: #eff1f9; }
.running svg { position: relative; }
.lbadge { position: absolute; left: 28px; top: 8px; width: 20px; height: 20px; border-radius: 50%; background: #bf360c; color: #f2d9d0; font-size: 11px; line-height: 20px; text-align: center; }
.tray { margin-left: auto; display: flex; align-items: center; height: 58px; font-size: 14.300px; line-height: 20px; color: #222; padding-right: 26px; }
.tray > div { display: flex; justify-content: center; }
.t2 { width: 40px; }
.t1 { width: 40px; }
.t3 { width: 30px; }
.tray .lang { display: block; text-align: center; width: 60px; }
.tray .date { display: block; text-align: right; width: 92.500px; }
.lang { margin-right: 1px; }
.tray .lang, .tray .date { padding-bottom: 1px; }
.bell { margin-left: 11px; }
</style>
